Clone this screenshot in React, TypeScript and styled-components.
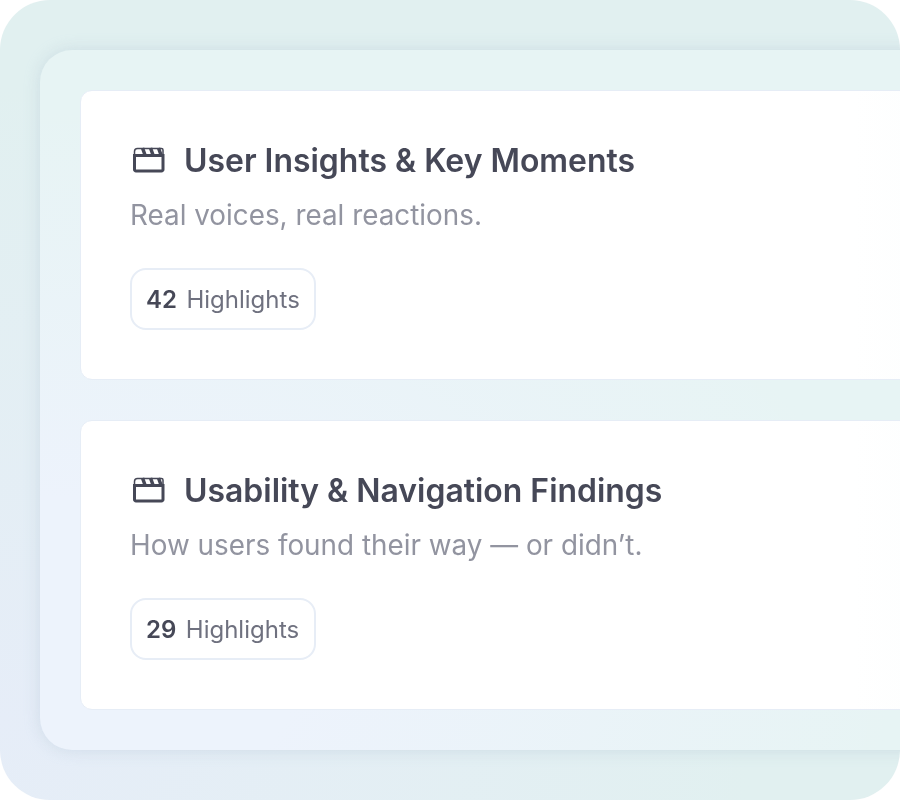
import React from 'react';
import styled, { createGlobalStyle } from 'styled-components';

const GlobalStyle = createGlobalStyle`
  html, body {
    margin: 0;
    padding: 0;
    background: #fff;
    font-family: Inter, "Liberation Sans", sans-serif;
  }
`;

const Frame = styled.div`
  width: 900px;
  height: 800px;
  box-sizing: border-box;
  padding: 50px 0 50px 40px;
  border-radius: 50px;
  overflow: hidden;
  background:
    radial-gradient(ellipse 760px 640px at 0% 90%, #e6edf8 0%, rgba(230, 237, 248, 0) 100%),
    #e1f0f0;
`;

const Panel = styled.div`
  width: 900px;
  height: 700px;
  box-sizing: border-box;
  padding: 40px;
  display: flex;
  flex-direction: column;
  gap: 40px;
  border-radius: 32px;
  background:
    radial-gradient(ellipse 860px 560px at 0% 88%, #edf3fc 0%, #edf3fc 30%, rgba(237, 243, 252, 0) 100%),
    #e7f4f4;
  box-shadow: 0 0 16px rgba(160, 180, 200, 0.32);
`;

const Card = styled.section`
  width: 900px;
  height: 290px;
  box-sizing: border-box;
  padding: 50px 49px;
  border: 1px solid #e6edf6;
  border-radius: 12px;
  background: linear-gradient(90deg, #fff 86%, #fbfdfd 100%);
  will-change: opacity;
`;

const TitleRow = styled.div`
  display: flex;
  align-items: center;
  gap: 19px;
  height: 38px;
  margin-left: 1px;
`;

const Title = styled.h2`
  margin: 0;
  padding-top: 2px;
  font-size: 31.93px;
  line-height: 38px;
  font-weight: 600;
  color: #464857;
`;

const Description = styled.p`
  margin: 17px 0 0;
  font-size: 27.85px;
  line-height: 38px;
  font-weight: 400;
  color: #9294a0;
`;

const Badge = styled.div`
  display: flex;
  align-items: center;
  gap: 9.5px;
  width: 186px;
  height: 62px;
  box-sizing: border-box;
  margin-top: 34px;
  padding: 0 14px;
  border: 2px solid #e7edf6;
  border-radius: 16px;
  font-size: 24px;
  color: #6f717f;
`;

const Count = styled.strong`
  font-weight: 600;
  color: #464857;
`;

const ClapperIcon = () => (
  <svg width="34" height="28" viewBox="0 0 34 28" fill="none" stroke="#464857">
    <path d="M3.500 9.500h28.500v14a1.500 1.500 0 0 1-1.500 1.500h-25.500a1.500 1.500 0 0 1-1.500-1.500z" strokeWidth="3" />
    <path d="M3.500 9.500v-4a3 3 0 0 1 3-3h24a1.500 1.500 0 0 1 1.500 1.500v6" strokeWidth="1.500" />
    <path d="M11.500 2l2.500 7M19.500 2l2.500 7M27.500 2l2.500 7" strokeWidth="3.500" />
  </svg>
);

const sections = [
  { title: 'User Insights & Key Moments', description: 'Real voices, real reactions.', count: 42 },
  { title: 'Usability & Navigation Findings', description: 'How users found their way — or didn’t.', count: 29 },
];

const App: React.FC = () => (
  <>
    <GlobalStyle />
    <Frame>
      <Panel>
        {sections.map(section => (
          <Card key={section.title}>
            <TitleRow>
              <ClapperIcon />
              <Title>{section.title}</Title>
            </TitleRow>
            <Description>{section.description}</Description>
            <Badge>
              <Count>{section.count}</Count>
              Highlights
            </Badge>
          </Card>
        ))}
      </Panel>
    </Frame>
  </>
);

export default App;
